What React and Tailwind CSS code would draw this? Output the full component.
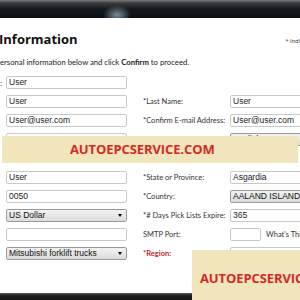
import React from "react";

const Input = ({ value = "", className = "w-[121px]" }) => (
    <div className={`h-[13px] shrink-0 border border-[#c9c9c9] rounded-[2px] bg-white pl-[2px] flex items-center text-[8.5px] text-[#222] font-['Liberation_Sans'] leading-none whitespace-nowrap overflow-hidden ${className}`}>
        {value}
    </div>
);

const Select = ({ value, className = "w-[121px]" }) => (
    <div className={`h-[13px] shrink-0 border border-[#9a9a9a] rounded-[2px] bg-[linear-gradient(#f2f2f2,#dcdcdc)] pl-[2px] pr-[4px] flex items-center justify-between text-[8.5px] text-[#111] font-['Liberation_Sans'] leading-none whitespace-nowrap overflow-hidden ${className}`}>
        <span>{value}</span>
        <span className="w-0 h-0 border-l-[2.5px] border-r-[2.5px] border-t-[3px] border-l-transparent border-r-transparent border-t-black" />
    </div>
);

const Label = ({ children, red }) => (
    <div className={`w-[88px] shrink-0 pl-[1px] text-[7.5px] leading-none whitespace-nowrap font-['Lato'] ${red ? "text-[#b8262b] font-bold" : "text-[#333]"}`}>
        {children}
    </div>
);

const Row = ({ left, label, right, colon }) => (
    <div className="flex items-center h-[13px]">
        <div className="w-[6px] shrink-0 text-[8px] text-[#333] font-['Lato'] leading-none">{colon ? ":" : ""}</div>
        <div className="w-[136px] shrink-0">{left}</div>
        {label !== undefined && <Label red={label.startsWith("*Region")}>{label}</Label>}
        {right}
    </div>
);

export default function App() {
    return (
        <div className="relative w-[300px] h-[300px] overflow-hidden bg-white">
            <div className="h-[18px] bg-[linear-gradient(180deg,#7a7a7a_0px,#3a3c40_3px,#15181d_9px,#0b0e13_18px)]">
                <div className="h-full bg-[radial-gradient(ellipse_14px_10px_at_117px_15px,rgba(150,170,190,0.8),transparent)]" />
            </div>

            <div className="flex justify-between items-end mt-[13px]">
                <h1 className="text-[13px] font-bold text-[#111] leading-[16px] font-['Open_Sans'] -ml-[1px]">Information</h1>
                <span className="text-[6px] italic text-[#333] font-['Open_Sans'] mr-[-8px] mb-[1px] whitespace-nowrap">* Indicat</span>
            </div>

            <p className="mt-[10px] text-[7.7px] leading-[11px] text-[#222] font-['Lato'] whitespace-nowrap">
                ersonal information below and click <b>Confirm</b> to proceed.
            </p>

            <div className="mt-[8px] flex flex-col gap-[6px]">
                <Row colon left={<Input value="User" />} />
                <Row left={<Input value="User" />} label="*Last Name:" right={<Input value="User" className="w-[90px]" />} />
                <Row left={<Input value="User@user.com" />} label="*Confirm E-mail Address:" right={<Input value="User@user.com" className="w-[90px]" />} />
                <Row left={<Input value="000-000" />} label="*Language:" right={<Select value="English" className="w-[90px]" />} />
                <div className="h-[13px]" />
                <Row left={<Input value="User" />} label="*State or Province:" right={<Input value="Asgardia" className="w-[90px]" />} />
                <Row left={<Input value="0050" />} label="*Country:" right={<Select value="AALAND ISLANDS" className="w-[90px]" />} />
                <Row left={<Select value="US Dollar" />} label="*# Days Pick Lists Expire:" right={<Input value="365" className="w-[90px]" />} />
                <Row
                    left={<Input />}
                    label="SMTP Port:"
                    right={
                        <div className="flex items-center gap-[5px]">
                            <Input className="w-[31px]" />
                            <span className="text-[7.5px] text-[#333] font-['Lato'] whitespace-nowrap">What's This?</span>
                        </div>
                    }
                />
                <Row left={<Select value="Mitsubishi forklift trucks" />} label="*Region:" right={<Input className="w-[90px]" />} />
            </div>

            <div className="mt-[33px] h-[10px] bg-[linear-gradient(180deg,#555,#1c1c1c_3px,#111)]" />

            <div className="absolute left-[2px] top-[136px] w-[296px] h-[27px] bg-[#f0e5bb] flex items-center pl-[68px]">
                <span className="text-[13px] font-bold text-[#d42a27] font-['Open_Sans'] tracking-[-0.1px]">AUTOEPCSERVICE.COM</span>
            </div>
            <div className="absolute left-[192px] top-[250px] w-[140px] h-[60px] bg-[#f0e5bb] flex items-start pl-[8px] pt-[19px]">
                <span className="text-[13px] font-bold text-[#d42a27] font-['Open_Sans'] tracking-[-0.1px] whitespace-nowrap">AUTOEPCSERVICE.COM</span>
            </div>
        </div>
    );
}
